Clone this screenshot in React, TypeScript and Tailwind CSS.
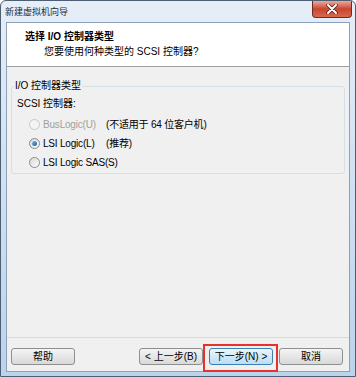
import { useState } from "react";

const cjk = { fontFamily: '"Liberation Sans", "Noto Sans CJK SC", sans-serif' };

function Radio({ checked, disabled }: { checked?: boolean; disabled?: boolean }) {
  return (
    <span
      className={`inline-flex h-[11px] w-[11px] flex-none items-center justify-center rounded-full border ${
        disabled ? "border-[#c8c8c8] bg-[#f4f4f4]" : "border-[#8a8a8a] bg-gradient-to-br from-[#d8d8d8] to-[#fdfdfd]"
      }`}
    >
      {checked && (
        <span className="h-[5px] w-[5px] rounded-full bg-gradient-to-br from-[#7cc0ef] to-[#16599b]" />
      )}
    </span>
  );
}

function WinButton({ label, primary }: { label: string; primary?: boolean }) {
  return (
    <button
      className={`flex h-[17px] w-[64px] items-center justify-center rounded-[3px] border text-[10px] text-black ${
        primary
          ? "border-[#3c7fb1] bg-gradient-to-b from-[#e9f6fd] to-[#b9def5]"
          : "border-[#8e8f8f] bg-gradient-to-b from-[#f4f4f4] to-[#d9d9d9]"
      }`}
    >
      {label}
    </button>
  );
}

export default function App() {
  const [choice] = useState("lsi");
  return (
    <div
      className="flex h-[377px] w-[356px] flex-col overflow-hidden rounded-t-[6px] border border-[#4e5f73] bg-gradient-to-b from-[#e6eef7] via-[#cfe0f2] to-[#bcd3ec]"
      style={cjk}
    >
      {/* title bar */}
      <div className="flex h-[21px] flex-none items-start justify-between">
        <span className="pl-[4px] pt-[5px] text-[9px] leading-[12px] text-[#1b2b3d]">新建虚拟机向导</span>
        <div className="mr-[3px] flex h-[17px] w-[40px] items-center justify-center rounded-b-[4px] border border-t-0 border-[#6d2a22] bg-gradient-to-b from-[#e9a99d] via-[#c9432e] to-[#d66a4d]">
          <svg width="12" height="10" viewBox="0 0 12 10">
            <path d="M2 1 L10 9 M10 1 L2 9" stroke="#4b1a12" strokeWidth="3.4" strokeLinecap="round" />
            <path d="M2 1 L10 9 M10 1 L2 9" stroke="#ffffff" strokeWidth="2" strokeLinecap="round" />
          </svg>
        </div>
      </div>

      {/* client */}
      <div className="mx-[5px] flex flex-1 flex-col border border-[#8ca2bb] bg-[#f0f0f0]">
        <div className="flex h-[44px] flex-none flex-col border-b border-[#a0a0a0] bg-white pl-[18px] pt-[7px]">
          <span className="text-[10px] font-bold leading-[14px] text-black">选择 I/O 控制器类型</span>
          <span className="pl-[19px] pt-[1px] text-[10px] leading-[13px] text-black">您要使用何种类型的 SCSI 控制器?</span>
        </div>

        <div className="flex flex-1 flex-col px-[4px] pt-[19px]">
          <div className="relative flex h-[88px] flex-col rounded-[3px] border border-[#d5dfe5] px-[5px] pt-[10px]">
            <span className="absolute -top-[8px] left-[2px] bg-[#f0f0f0] px-[1px] text-[10px] leading-[14px] text-black">
              I/O 控制器类型
            </span>
            <span className="text-[10px] leading-[13px] text-black">SCSI 控制器:</span>
            <div className="mt-[8px] flex flex-col gap-[6px] pl-[12px]">
              <div className="flex h-[13px] items-center text-[10px] tracking-[-0.2px]">
                <Radio disabled checked={choice === "bus"} />
                <span className="ml-[3px] w-[63px] flex-none text-[#a0a0a0]">BusLogic(U)</span>
                <span className="text-black">(不适用于 64 位客户机)</span>
              </div>
              <div className="flex h-[13px] items-center text-[10px] tracking-[-0.2px]">
                <Radio checked={choice === "lsi"} />
                <span className="ml-[3px] w-[63px] flex-none text-black">LSI Logic(L)</span>
                <span className="text-black">(推荐)</span>
              </div>
              <div className="flex h-[13px] items-center text-[10px] tracking-[-0.2px]">
                <Radio checked={choice === "sas"} />
                <span className="ml-[3px] text-black">LSI Logic SAS(S)</span>
              </div>
            </div>
          </div>
        </div>

        <div className="relative flex h-[34px] flex-none items-end border-t border-[#dadada] pb-[6px] pl-[4px] pr-[6px]">
          <WinButton label="帮助" />
          <div className="flex-1" />
          <WinButton label="< 上一步(B)" />
          <div className="ml-[6px]">
            <WinButton label="下一步(N) >" primary />
          </div>
          <div className="ml-[6px]">
            <WinButton label="取消" />
          </div>
          <div className="pointer-events-none absolute left-[196px] top-[6px] h-[28px] w-[75px] border-2 border-[#e8302c]" />
        </div>
      </div>
      <div className="h-[4px] flex-none" />
    </div>
  );
}
